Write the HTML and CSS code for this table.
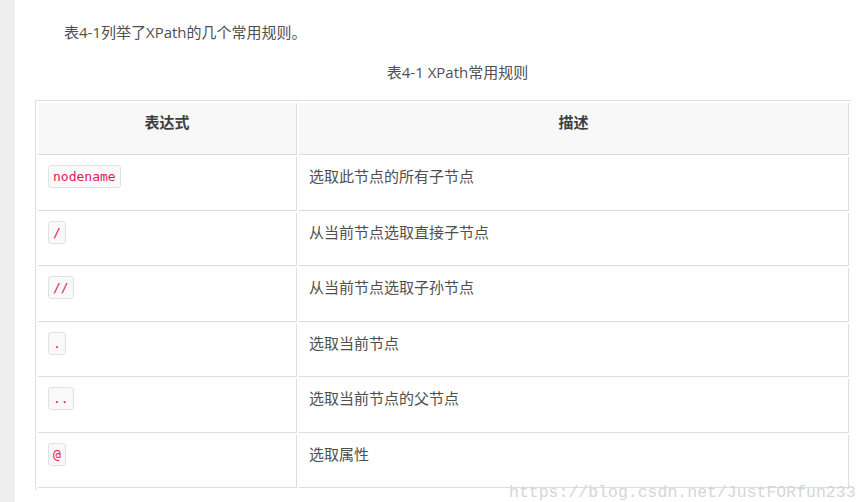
FILE: index.html
```html
<!DOCTYPE html>
<html lang="zh">
<head>
<meta charset="utf-8">
<title>XPath常用规则</title>
<link rel="stylesheet" href="styles.css">
</head>
<body>
<div class="sidebar"></div>
<main class="main">
  <p class="para">表4-1列举了XPath的几个常用规则。</p>
  <p class="para caption">表4-1 XPath常用规则</p>
  <table class="rules">
    <thead>
      <tr><th class="col-expr">表达式</th><th class="col-desc">描述</th></tr>
    </thead>
    <tbody>
      <tr><td><code class="code">nodename</code></td><td>选取此节点的所有子节点</td></tr>
      <tr><td><code class="code">/</code></td><td>从当前节点选取直接子节点</td></tr>
      <tr><td><code class="code">//</code></td><td>从当前节点选取子孙节点</td></tr>
      <tr><td><code class="code">.</code></td><td>选取当前节点</td></tr>
      <tr><td><code class="code">..</code></td><td>选取当前节点的父节点</td></tr>
      <tr><td><code class="code">@</code></td><td>选取属性</td></tr>
    </tbody>
  </table>
</main>
<div class="watermark">https://blog.csdn.net/JustFORfun233</div>
</body>
</html>
```

FILE: styles.css
```css
html, body {
  margin: 0;
  padding: 0;
  height: 502px;
  overflow: hidden;
  background: #ffffff;
}
body {
  display: flex;
  font-family: "Open Sans", "Noto Sans CJK SC", sans-serif;
  font-size: 15px;
  color: #4f4f4f;
  position: relative;
}
.sidebar {
  width: 15px;
  flex: none;
  background: #eeeeee;
}
.main {
  flex: 1;
  padding: 20px 0 0 20px;
}
.para {
  margin: 0 0 16px 0;
  line-height: 24px;
  text-indent: 29px;
  width: 816px;
}
.caption {
  text-align: center;
}
.rules {
  width: 816px;
  border-collapse: separate;
  border-spacing: 2px;
  border-top: 1px solid #dddddd;
  border-left: 1px solid #dddddd;
}
.rules th,
.rules td {
  border-right: 1px solid #dddddd;
  border-bottom: 1px solid #dddddd;
  line-height: 24px;
  vertical-align: top;
  text-align: left;
}
.rules th {
  background: #f8f8f8;
  font-weight: bold;
  color: #3f3f3f;
  text-align: center;
  padding: 7px 10px 20px 10px;
}
.rules td {
  padding: 7px 10px 21.5px 10px;
}
.col-expr {
  width: 238px;
}
.code {
  display: inline-block;
  vertical-align: top;
  margin-top: 1px;
  font-family: "DejaVu Sans Mono", monospace;
  font-size: 13px;
  line-height: 15px;
  padding: 3px 4px;
  color: #e0195b;
  background: #f9f9f9;
  border: 1px solid #e1e1e8;
  border-radius: 3px;
}
.watermark {
  position: absolute;
  left: 509px;
  top: 483px;
  font-family: "Liberation Mono", monospace;
  font-size: 16.5px;
  line-height: 20px;
  color: #d6d6d6;
  white-space: nowrap;
}
```
